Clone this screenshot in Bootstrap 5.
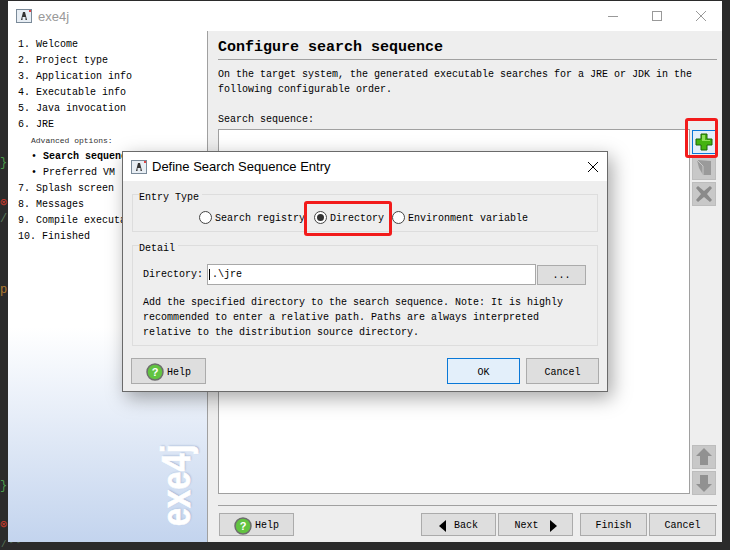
<!DOCTYPE html>
<html><head><meta charset="utf-8">
<link href="https://cdn.jsdelivr.net/npm/bootstrap@5.3.0/dist/css/bootstrap.min.css" rel="stylesheet">
<style>
html,body{width:730px;height:550px;margin:0;overflow:hidden;background:#2b2b2b}
body{font:10px/15px "Liberation Mono",monospace;color:#000;position:relative}
.gut{position:absolute;left:0;font:12px/12px "Liberation Mono",monospace;color:#4a9b4a}
.win{position:absolute;left:8px;top:1px;width:714px;height:541px;background:#eee;display:flex;flex-direction:column}
.tbar{height:30px;background:#fff;display:flex;align-items:center;flex:none;position:relative}
.tbar .ttl{font:13px "Liberation Sans",sans-serif;color:#999;margin-left:6px}
.appico{width:16px;height:14px;margin-left:8px;flex:none}
.wbtns{margin-left:auto;display:flex;align-items:center;gap:34px;padding-right:16px}
.main{flex:1;display:flex;min-height:0}
.side{flex:none;border-right:1px solid #a0a0a0;background:linear-gradient(#fff 0,#fff 58%,#c3d4ee 100%);padding:6px 0 0 10px;position:relative;width:200px;font-size:10px;line-height:16px;overflow:hidden}
.stp{display:flex}.stp .num{width:18px}
.adv{font-size:8px;padding-left:13px;line-height:16px;color:#333}
.sub{padding-left:13px}
.logo{position:absolute;left:125px;top:446px;width:86px;text-align:center;font:bold 40px/28px "Liberation Sans Narrow","Liberation Sans",sans-serif;color:#fff;transform:rotate(-90deg) scaleX(.82);transform-origin:center;text-shadow:1px 1px 2px #9fb3d3;white-space:nowrap;-webkit-text-stroke:.7px #fff}
.pane{flex:1;padding:0 5px 0 10px;display:flex;flex-direction:column;min-width:0}
.hdr{font-size:15px;font-weight:700;line-height:20px;padding-top:7px;border-bottom:1px solid #a0a0a0;box-sizing:content-box;height:21px;width:499px}
.desc{margin:7px 0 0;line-height:15px;height:30px}
.lbl{margin-top:15px;line-height:15px}
.lstrow{display:flex;gap:2px;margin-top:2px;height:365px;width:499px}
.lbox{flex:none;width:472px;background:#fff;border:1px solid #a0a0a0}
.tools{display:flex;flex-direction:column;gap:2px;width:24px;margin-top:1px;margin-bottom:-1px}
.tb{width:24px;height:24px;background:#c8c8c8;border:1px solid #bdbdbd;display:flex;align-items:center;justify-content:center;padding:0}
.tb.on{background:#e3effa;border-color:#0a78d7}
.hline{border-top:1px solid #a0a0a0;margin-top:11px;width:499px}
.foot{display:flex;margin-top:7px;width:498px;padding-left:1px;height:23px}
.wb{background:#dedede;border:1px solid #ababab;color:#000;font:10px/15px "Liberation Mono",monospace;height:23px;display:flex;align-items:center;justify-content:center;gap:3px;padding:2px 0 0}
.wb.ok{background:#e3effa;border-color:#0a78d7}
.dlg{position:absolute;left:122px;top:151px;width:486px;height:241px;background:#eee;border:1px solid #6a6a6a;box-shadow:4px 6px 18px rgba(0,0,0,.35);display:flex;flex-direction:column}
.dtbar{height:29px;background:#fff;display:flex;align-items:center;flex:none}
.dtbar .ttl{font:13px "Liberation Sans",sans-serif;margin-left:5px}
.grp{position:relative;border:1px solid #ddd;margin:0 9px;width:466px}
.grp>.cap{position:absolute;left:6px;top:-4px;background:#eee;padding:0 3px 0 0;line-height:14px;height:14px}
.g1{height:38px;margin-top:13px}
.g2{height:101px;margin-top:13px;padding:18px 10px 0 10px}
.rrow{position:absolute;top:15px;left:66px;display:flex;align-items:center;height:16px}
.rad{display:flex;align-items:center;gap:3px}
.dot{width:13px;height:13px;border:1px solid #444;border-radius:50%;background:#fff;display:block;flex:none;position:relative;margin-top:-1px}
.dot.sel:after{content:"";position:absolute;left:2px;top:2px;width:7px;height:7px;border-radius:50%;background:#333}
.dirrow{display:flex;align-items:center}
.inp{width:329px;height:21px;background:#fff;border:1px solid #a8a8a8;margin-left:4px;padding-left:1px;line-height:19px;flex:none}
.caret{border-left:1px solid #000;padding-left:2px}
.brw{width:49px;height:20px;margin-left:1px}
.note{margin:10px 0 0;line-height:15px}
.dfoot{display:flex;margin:12px 0 0 8px;width:468px}
.dfoot .wb{height:26px}
.rmark{position:absolute;border:3px solid #f21b1b;border-radius:3px;pointer-events:none}
.cut{top:541px;font-size:9px;line-height:9px;left:1px;color:#5a7a5a;letter-spacing:2px}
</style></head><body>
<div class="gut" style="top:157px">}</div>
<div class="gut" style="top:197px;color:#c0392b">⊗</div>
<div class="gut" style="top:213px;color:#5a7a5a">/</div>
<div class="gut" style="top:284px;color:#b07a30">p</div>
<div class="gut" style="top:480px">}</div>
<div class="gut" style="top:519px;color:#c0392b">⊗</div>
<div class="gut cut">/**</div>

<div class="win">
  <div class="tbar">
    <svg class="appico" viewBox="0 0 16 14"><rect x=".5" y=".5" width="15" height="13" fill="#e8eef4" stroke="#7a8a99"/><path d="M5 11 7 3h2l2 8H9.5V8h-3v3z" fill="#333"/><rect x="13" y="1" width="2" height="2" fill="#d44"/></svg>
    <span class="ttl">exe4j</span>
    <div class="wbtns">
      <svg width="10" height="10"><path d="M0 5.5h10" stroke="#999"/></svg>
      <svg width="10" height="10"><rect x=".5" y=".5" width="9" height="9" fill="none" stroke="#999"/></svg>
      <svg width="10" height="10"><path d="M0 0l10 10M10 0 0 10" stroke="#999"/></svg>
    </div>
  </div>
  <div class="main">
    <div class="side">
      <div class="stp"><span class="num">1.</span>Welcome</div>
      <div class="stp"><span class="num">2.</span>Project type</div>
      <div class="stp"><span class="num">3.</span>Application info</div>
      <div class="stp"><span class="num">4.</span>Executable info</div>
      <div class="stp"><span class="num">5.</span>Java invocation</div>
      <div class="stp"><span class="num">6.</span>JRE</div>
      <div class="adv">Advanced options:</div>
      <div class="sub">• <b>Search sequence</b></div>
      <div class="sub">• Preferred VM</div>
      <div class="stp"><span class="num">7.</span>Splash screen</div>
      <div class="stp"><span class="num">8.</span>Messages</div>
      <div class="stp"><span class="num">9.</span>Compile executable</div>
      <div class="stp"><span class="num">10.</span>&nbsp;Finished</div>
      <div class="logo">exe4j</div>
    </div>
    <div class="pane">
      <div class="hdr">Configure search sequence</div>
      <p class="desc">On the target system, the generated executable searches for a JRE or JDK in the<br>following configurable order.</p>
      <div class="lbl">Search sequence:</div>
      <div class="lstrow">
        <div class="lbox"></div>
        <div class="tools">
          <div class="tb on"><svg width="20" height="20" viewBox="0 0 20 20"><path d="M7 2h6v5h5v6h-5v5H7v-5H2V7h5z" fill="#44b30f" stroke="#1c6608"/><path d="M8 3h3v5h5v1H8z" fill="#8fe05a"/></svg></div>
          <div class="tb"><svg width="18" height="18" viewBox="0 0 18 18"><path d="M2 1l14 1v14H8L4 9z" fill="#9a9a9a"/><path d="M2 1l6 6v9" fill="none" stroke="#c8c8c8"/></svg></div>
          <div class="tb"><svg width="20" height="20" viewBox="0 0 20 20"><path d="M4 2l6 5 6-5 2 2-5 6 5 6-2 2-6-5-6 5-2-2 5-6-5-6z" fill="#8a8a8a"/></svg></div>
          <div class="flex-grow-1"></div>
          <div class="tb"><svg width="18" height="20" viewBox="0 0 18 20"><path d="M9 1l8 8h-4v9H5V9H1z" fill="#919191"/></svg></div>
          <div class="tb"><svg width="18" height="20" viewBox="0 0 18 20"><path d="M9 19l8-8h-4V2H5v9H1z" fill="#919191"/></svg></div>
        </div>
      </div>
      <div class="hline"></div>
      <div class="foot">
        <button class="wb" style="width:75px"><svg width="18" height="18" viewBox="0 0 18 18"><circle cx="9" cy="9" r="8" fill="#62c341" stroke="#6d6d6d" stroke-width="1.5"/><text x="9" y="13" text-anchor="middle" font-size="11" font-weight="700" fill="#fff" font-family="Liberation Sans">?</text></svg>Help</button>
        <button class="wb" style="width:75px;margin-left:127px;gap:7px"><svg width="8" height="12"><path d="M7 0v12L0 6z" fill="#000"/></svg>Back</button>
        <button class="wb" style="width:75px;margin-left:2px;gap:10px">Next<svg width="8" height="12"><path d="M1 0v12l7-6z" fill="#000"/></svg></button>
        <button class="wb" style="width:67px;margin-left:7px">Finish</button>
        <button class="wb" style="width:67px;margin-left:2px">Cancel</button>
      </div>
    </div>
  </div>
</div>

<div class="dlg">
  <div class="dtbar">
    <svg class="appico" viewBox="0 0 16 14"><rect x=".5" y=".5" width="15" height="13" fill="#e8eef4" stroke="#7a8a99"/><path d="M5 11 7 3h2l2 8H9.5V8h-3v3z" fill="#333"/><rect x="13" y="1" width="2" height="2" fill="#d44"/></svg>
    <span class="ttl">Define Search Sequence Entry</span>
    <svg class="ms-auto me-2" width="12" height="12"><path d="M1 1l10 10M11 1 1 11" stroke="#000"/></svg>
  </div>
  <div class="grp g1"><span class="cap">Entry Type</span>
    <div class="rrow">
      <span class="rad"><i class="dot"></i>Search registry</span>
      <span class="rad" style="margin-left:9px"><i class="dot sel"></i>Directory</span>
      <span class="rad" style="margin-left:8px"><i class="dot"></i>Environment variable</span>
    </div>
  </div>
  <div class="grp g2"><span class="cap">Detail</span>
    <div class="dirrow">Directory:<div class="inp"><span class="caret"></span>.\jre</div><button class="wb brw">...</button></div>
    <p class="note">Add the specified directory to the search sequence. Note: It is highly<br>recommended to enter a relative path. Paths are always interpreted<br>relative to the distribution source directory.</p>
  </div>
  <div class="dfoot">
    <button class="wb" style="width:75px"><svg width="18" height="18" viewBox="0 0 18 18"><circle cx="9" cy="9" r="8" fill="#62c341" stroke="#6d6d6d" stroke-width="1.5"/><text x="9" y="13" text-anchor="middle" font-size="11" font-weight="700" fill="#fff" font-family="Liberation Sans">?</text></svg>Help</button>
    <button class="wb ok" style="width:73px;margin-left:241px">OK</button>
    <button class="wb" style="width:73px;margin-left:6px">Cancel</button>
  </div>
</div>
<div class="rmark" style="left:685px;top:118px;width:33px;height:40px"></div>
<div class="rmark" style="left:304px;top:201px;width:88px;height:35px"></div>
</body></html>
